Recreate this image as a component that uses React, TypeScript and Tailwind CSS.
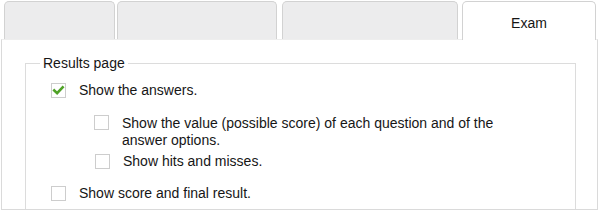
import * as React from "react";

function Box({ checked }: { checked?: boolean }) {
  return (
    <div className="w-[15px] h-[15px] shrink-0 border border-[#cdcdcd] bg-white flex items-center justify-center">
      {checked && (
        <svg width="15" height="15" viewBox="0 0 15 15" className="block">
          <path d="M2.6 7.4 L5.9 10.6 L12.3 3.8" fill="none" stroke="#4fa227" strokeWidth="3" strokeLinecap="square" />
        </svg>
      )}
    </div>
  );
}

export default function App() {
  return (
    <div className="w-[601px] h-[211px] overflow-hidden bg-white text-[14px] leading-[17px] text-[#161616] font-['Liberation_Sans',Arial,sans-serif]">
      {/* tabs */}
      <div className="flex items-start h-[40px] pt-[1px] pl-[4px]">
        <div className="w-[111px] h-[38px] bg-[#ececed] border border-b-0 border-[#d2d2d2] rounded-t-[5px]" />
        <div className="ml-[2px] w-[160px] h-[38px] bg-[#ececed] border border-b-0 border-[#d2d2d2] rounded-t-[5px]" />
        <div className="ml-[5px] w-[176px] h-[38px] bg-[#ececed] border border-b-0 border-[#d2d2d2] rounded-t-[5px]" />
        <div className="relative z-10 ml-[4px] w-[134px] h-[39px] bg-white border border-b-0 border-[#d2d2d2] rounded-t-[5px] text-center pt-[13px]">
          Exam
        </div>
      </div>

      {/* panel */}
      <div className="relative z-0 -mt-[1px] ml-[1px] w-[597px] h-[171px] border border-[#dadada] border-t-[#eeeeee] pl-[23px] pt-[16px]">
        <fieldset className="w-[551px] h-[153px] border border-b-0 border-[#dcdcdc]">
          <legend className="ml-[14px] px-[3px] leading-[15px]">Results page</legend>

          <div className="flex items-start pl-[25px] mt-[11px]">
            <div className="mt-[1px]">
              <Box checked />
            </div>
            <span className="ml-[13px]">Show the answers.</span>
          </div>

          <div className="flex items-start pl-[68px] mt-[16px]">
            <Box />
            <span className="ml-[13px] w-[385px]">
              Show the value (possible score) of each question and of the answer options.
            </span>
          </div>

          <div className="flex items-start pl-[69px] mt-[4px]">
            <div className="mt-[1px]">
              <Box />
            </div>
            <span className="ml-[13px]">Show hits and misses.</span>
          </div>

          <div className="flex items-start pl-[25px] mt-[15px]">
            <div className="mt-[1px]">
              <Box />
            </div>
            <span className="ml-[13px]">Show score and final result.</span>
          </div>
        </fieldset>
      </div>
    </div>
  );
}
